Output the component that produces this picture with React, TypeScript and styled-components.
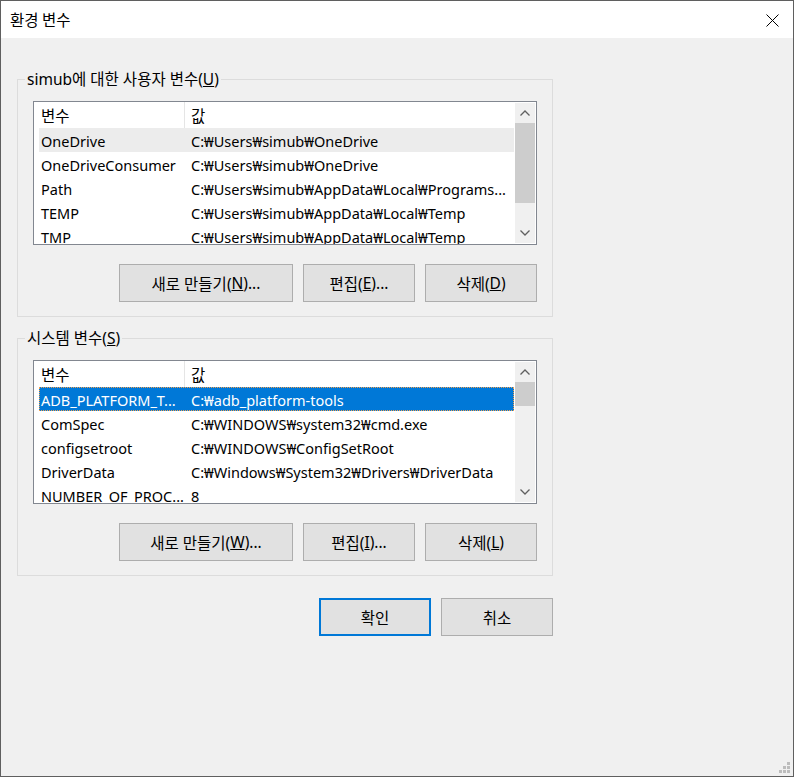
import styled, { createGlobalStyle } from "styled-components";

const GlobalStyle = createGlobalStyle`
  html, body {
    margin: 0;
    padding: 0;
    background: #f0f0f0;
  }
  body {
    font-family: "Noto Sans", "Noto Sans CJK KR", sans-serif;
    font-size: 14.5px;
    color: #000;
  }
`;

type Row = [string, string];

const userVars: Row[] = [
  ["OneDrive", "C:₩Users₩simub₩OneDrive"],
  ["OneDriveConsumer", "C:₩Users₩simub₩OneDrive"],
  ["Path", "C:₩Users₩simub₩AppData₩Local₩Programs..."],
  ["TEMP", "C:₩Users₩simub₩AppData₩Local₩Temp"],
  ["TMP", "C:₩Users₩simub₩AppData₩Local₩Temp"],
];

const systemVars: Row[] = [
  ["ADB_PLATFORM_T...", "C:₩adb_platform-tools"],
  ["ComSpec", "C:₩WINDOWS₩system32₩cmd.exe"],
  ["configsetroot", "C:₩WINDOWS₩ConfigSetRoot"],
  ["DriverData", "C:₩Windows₩System32₩Drivers₩DriverData"],
  ["NUMBER_OF_PROC...", "8"],
];

const Chevron = ({ up }: { up?: boolean }) => (
  <svg width="10" height="6" viewBox="0 0 10 6">
    <polyline
      points={up ? "0.5,5.5 5,1 9.5,5.5" : "0.5,0.5 5,5 9.5,0.5"}
      fill="none"
      stroke="#606060"
      strokeWidth="1.3"
    />
  </svg>
);

const VarList = ({
  rows,
  selected,
  hovered,
  thumb,
}: {
  rows: Row[];
  selected?: number;
  hovered?: number;
  thumb: number;
}) => (
  <List>
    <ListBody>
      <Header>
        <HeadCell $first>변수</HeadCell>
        <HeadCell>값</HeadCell>
      </Header>
      <Rows>
        {rows.map(([name, value], i) => (
          <ItemRow key={name} $selected={i === selected} $hover={i === hovered}>
            <NameCell>{name}</NameCell>
            <ValueCell>{value}</ValueCell>
          </ItemRow>
        ))}
      </Rows>
    </ListBody>
    <ScrollBar>
      <ArrowBox>
        <Chevron up />
      </ArrowBox>
      <Track>
        <Thumb $h={thumb} />
      </Track>
      <ArrowBox>
        <Chevron />
      </ArrowBox>
    </ScrollBar>
  </List>
);

const App = () => {
  return (
    <>
      <GlobalStyle />
      <Frame>
        <TitleBar>
          <Title>환경 변수</Title>
          <CloseButton>
            <svg width="13" height="13" viewBox="0 0 13 13">
              <line x1="0.5" y1="0.5" x2="12.5" y2="12.5" stroke="#000" strokeWidth="1" />
              <line x1="12.5" y1="0.5" x2="0.5" y2="12.5" stroke="#000" strokeWidth="1" />
            </svg>
          </CloseButton>
        </TitleBar>
        <Body>
          <Group>
            <Legend>
              simub에 대한 사용자 변수(<u>U</u>)
            </Legend>
            <VarList rows={userVars} hovered={0} thumb={80} />
            <ButtonRow>
              <Button $w={174}>
                새로 만들기(<u>N</u>)...
              </Button>
              <Button $w={112}>
                편집(<u>E</u>)...
              </Button>
              <Button $w={112}>
                삭제(<u>D</u>)
              </Button>
            </ButtonRow>
          </Group>
          <Group $gap={11}>
            <Legend>
              시스템 변수(<u>S</u>)
            </Legend>
            <VarList rows={systemVars} selected={0} thumb={24} />
            <ButtonRow>
              <Button $w={174}>
                새로 만들기(<u>W</u>)...
              </Button>
              <Button $w={112}>
                편집(<u>I</u>)...
              </Button>
              <Button $w={112}>
                삭제(<u>L</u>)
              </Button>
            </ButtonRow>
          </Group>
          <DialogButtons>
            <Button $w={112} $primary>
              확인
            </Button>
            <Button $w={112}>취소</Button>
          </DialogButtons>
        </Body>
        <Grip viewBox="0 0 11 11" width="11" height="11">
          <rect x="8" y="0" width="3" height="3" fill="#bcbcbc" />
          <rect x="4" y="4" width="3" height="3" fill="#bcbcbc" />
          <rect x="8" y="4" width="3" height="3" fill="#bcbcbc" />
          <rect x="0" y="8" width="3" height="3" fill="#bcbcbc" />
          <rect x="4" y="8" width="3" height="3" fill="#bcbcbc" />
          <rect x="8" y="8" width="3" height="3" fill="#bcbcbc" />
        </Grip>
      </Frame>
    </>
  );
};

export default App;

const Frame = styled.div`
  position: relative;
  width: 794px;
  height: 777px;
  box-sizing: border-box;
  border: 1px solid #5f5f5f;
  background: #f0f0f0;
  display: flex;
  flex-direction: column;
`;

const TitleBar = styled.div`
  height: 37px;
  background: #fff;
  display: flex;
  align-items: center;
  justify-content: space-between;
  padding: 0 14px 0 9px;
`;

const Title = styled.div`
  font-family: "Noto Sans CJK KR", sans-serif;
  font-size: 15.5px;
  padding-bottom: 1px;
`;

const CloseButton = styled.div`
  display: flex;
  align-items: center;
  margin-top: 1px;
`;

const Body = styled.div`
  flex: 1;
  padding: 31px 0 0 16px;
  display: flex;
  flex-direction: column;
  align-items: flex-start;
`;

const Group = styled.fieldset<{ $gap?: number }>`
  margin: ${(p) => p.$gap ?? 0}px 0 0 0;
  padding: 12px 15px 14px 15px;
  width: 536px;
  min-width: 0;
  box-sizing: border-box;
  border: 1px solid #dcdcdc;
`;

const Legend = styled.legend`
  margin-left: -8px;
  padding: 0 2px;
  line-height: 20px;
  font-size: 15.5px;
  font-family: "Noto Sans", "Noto Sans CJK KR", sans-serif;
`;

const List = styled.div`
  width: 504px;
  height: 144px;
  box-sizing: border-box;
  border: 1px solid #828790;
  background: #fff;
  display: flex;
  overflow: hidden;
`;

const ListBody = styled.div`
  flex: 1;
  min-width: 0;
  display: flex;
  flex-direction: column;
  overflow: hidden;
`;

const Header = styled.div`
  height: 26px;
  display: flex;
  flex-shrink: 0;
`;

const HeadCell = styled.div<{ $first?: boolean }>`
  box-sizing: border-box;
  width: ${(p) => (p.$first ? "151px" : "auto")};
  flex: ${(p) => (p.$first ? "none" : "1")};
  border-right: ${(p) => (p.$first ? "1px solid #e5e5e5" : "none")};
  padding: 2px 0 0 ${(p) => (p.$first ? 7 : 6)}px;
  line-height: 22px;
  font-size: 15.5px;
  font-family: "Noto Sans CJK KR", sans-serif;
`;

const Rows = styled.div`
  padding: 0 1px 0 5px;
  display: flex;
  flex-direction: column;
`;

const ItemRow = styled.div<{ $selected?: boolean; $hover?: boolean }>`
  height: 24px;
  flex-shrink: 0;
  box-sizing: border-box;
  padding-top: 2px;
  display: flex;
  align-items: center;
  background: ${(p) => (p.$selected ? "#0078d7" : p.$hover ? "#ececec" : "transparent")};
  color: ${(p) => (p.$selected ? "#fff" : "#000")};
  outline: ${(p) => (p.$selected ? "1px dotted #f0a050" : "none")};
  outline-offset: -1px;
`;

const NameCell = styled.div`
  width: 150px;
  flex: none;
  padding-left: 2px;
  box-sizing: border-box;
  white-space: nowrap;
  overflow: hidden;
`;

const ValueCell = styled.div`
  flex: 1;
  padding-left: 2px;
  white-space: nowrap;
  overflow: hidden;
`;

const ScrollBar = styled.div`
  width: 20px;
  margin: 1px 1px 1px 0;
  background: #f0f0f0;
  display: flex;
  flex-direction: column;
  flex-shrink: 0;
`;

const ArrowBox = styled.div`
  height: 20px;
  display: flex;
  align-items: center;
  justify-content: center;
  flex-shrink: 0;
`;

const Track = styled.div`
  flex: 1;
`;

const Thumb = styled.div<{ $h: number }>`
  height: ${(p) => p.$h}px;
  background: #cdcdcd;
`;

const ButtonRow = styled.div`
  margin-top: 19px;
  display: flex;
  justify-content: flex-end;
  gap: 10px;
`;

const DialogButtons = styled.div`
  width: 536px;
  margin-top: 22px;
  display: flex;
  justify-content: flex-end;
  gap: 10px;
`;

const Button = styled.div<{ $w: number; $primary?: boolean }>`
  width: ${(p) => p.$w}px;
  height: 38px;
  box-sizing: border-box;
  background: #e1e1e1;
  border: ${(p) => (p.$primary ? "2px solid #0078d7" : "1px solid #adadad")};
  display: flex;
  align-items: center;
  justify-content: center;
  font-size: 15.5px;
  font-family: "Noto Sans", "Noto Sans CJK KR", sans-serif;
  white-space: nowrap;
`;

const Grip = styled.svg`
  position: absolute;
  right: 3px;
  bottom: 3px;
`;
